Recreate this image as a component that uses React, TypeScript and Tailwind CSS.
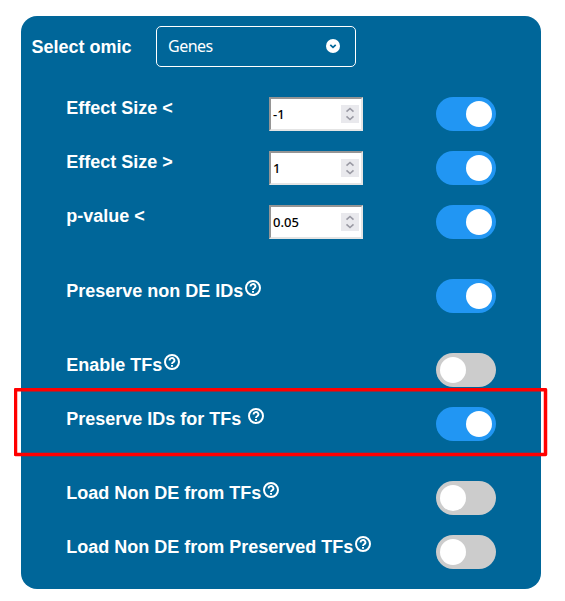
function HelpIcon({ className }: { className: string }) {
  return (
    <svg viewBox="0 0 16 16" className={`size-4 shrink-0 ${className}`} fill="none" stroke="currentColor">
      <circle cx="8" cy="8" r="7" strokeWidth="2" />
      <path d="M5.6 6.5a2.4 2.3 0 1 1 3.7 1.7C8.5 8.8 8 9.1 8 10.1" strokeWidth="1.9" />
      <path d="M8 10.9v1.9" strokeWidth="2" />
    </svg>
  );
}

function Toggle({ on }: { on: boolean }) {
  return (
    <button
      type="button"
      role="switch"
      aria-checked={on}
      className={`flex h-[34px] w-[60px] shrink-0 items-center rounded-full p-1 ${
        on ? "justify-end bg-[#2196f3]" : "justify-start bg-[#cccccc]"
      }`}
    >
      <span className="size-[26px] rounded-full bg-white" />
    </button>
  );
}

function NumberField({ value }: { value: string }) {
  return (
    <div className="flex h-[34px] w-[94px] items-center justify-between border-2 border-t-[#959595] border-l-[#959595] border-r-[#e4e4e4] border-b-[#e4e4e4] bg-white pr-0.5 pl-0.5 text-black">
      <span className="font-['Noto_Sans','Open_Sans',sans-serif] text-[13px] leading-none font-medium">{value}</span>
      <span className="flex h-[18px] w-[18px] items-center justify-center bg-[#e9e9ed]">
        <svg viewBox="0 0 18 18" className="size-[18px]" fill="none" stroke="#9a9aa4" strokeWidth="1.6">
          <path d="M5.5 6.7 9 3.5l3.5 3.2M5.5 11.3 9 14.5l3.5-3.2" />
        </svg>
      </span>
    </div>
  );
}

type Row = {
  label: string;
  on: boolean;
  value?: string;
  help?: boolean;
  gap?: boolean;
  spaced?: boolean;
  highlight?: boolean;
};

const rows: Row[] = [
  { label: "Effect Size <", value: "-1", on: true },
  { label: "Effect Size >", value: "1", on: true },
  { label: "p-value <", value: "0.05", on: true },
  { label: "Preserve non DE IDs", help: true, on: true, gap: true },
  { label: "Enable TFs", help: true, on: false, gap: true },
  { label: "Preserve IDs for TFs", help: true, spaced: true, on: true, highlight: true },
  { label: "Load Non DE from TFs", help: true, on: false, gap: true },
  { label: "Load Non DE from Preserved TFs", help: true, on: false },
];

function SettingRow({ row }: { row: Row }) {
  return (
    <div className={`relative flex h-[34px] items-start pr-[45px] pl-[45.2px] ${row.gap ? "mt-10" : "mt-5"} first:mt-0`}>
      <div className={`flex flex-1 items-start whitespace-nowrap ${row.help ? "pt-0.5" : "pt-px"}`}>
        <span className="text-lg leading-[21px]">{row.label}</span>
        {row.help && <HelpIcon className={row.spaced ? "-mt-px ml-[7px]" : "-mt-px ml-[1.5px]"} />}
      </div>
      {row.value && (
        <div className="mr-[73px]">
          <NumberField value={row.value} />
        </div>
      )}
      <Toggle on={row.on} />
      {row.highlight && (
        <svg
          viewBox="0 0 534 69"
          className="pointer-events-none absolute top-[-19px] left-[-7px] h-[69px] w-[534px]"
          fill="none"
        >
          <rect x="1.5" y="1.7" width="530" height="64.8" stroke="#ff0000" strokeWidth="3.5" strokeLinejoin="round" />
        </svg>
      )}
    </div>
  );
}

export default function App() {
  return (
    <main className="h-[601px] w-[565px] bg-white pt-4 pl-[21px] font-['Liberation_Sans',Arial,sans-serif] font-bold text-white">
      <section className="h-[573px] w-[520px] rounded-2xl bg-[#006699] pt-2.5">
        <div className="flex h-[41px] items-center pl-2.5">
          <span className="w-[125px] pl-[0.4px] text-lg">Select omic</span>
          <div className="flex h-[41px] w-[200px] items-center justify-between rounded-[5px] border border-white pr-[15px] pl-[11px] font-['Noto_Sans','Open_Sans',sans-serif] font-normal">
            <span className="-mt-px text-base tracking-[-0.5px]">Genes</span>
            <svg viewBox="0 0 14 14" className="-mt-px size-3.5">
              <circle cx="7" cy="7" r="7" fill="#fff" />
              <path d="m4.3 5.9 2.7 2.5 2.7-2.5" fill="none" stroke="#006699" strokeWidth="1.7" />
            </svg>
          </div>
        </div>
        <div className="pt-[30px]">
          {rows.map((row) => (
            <SettingRow key={row.label} row={row} />
          ))}
        </div>
      </section>
    </main>
  );
}
